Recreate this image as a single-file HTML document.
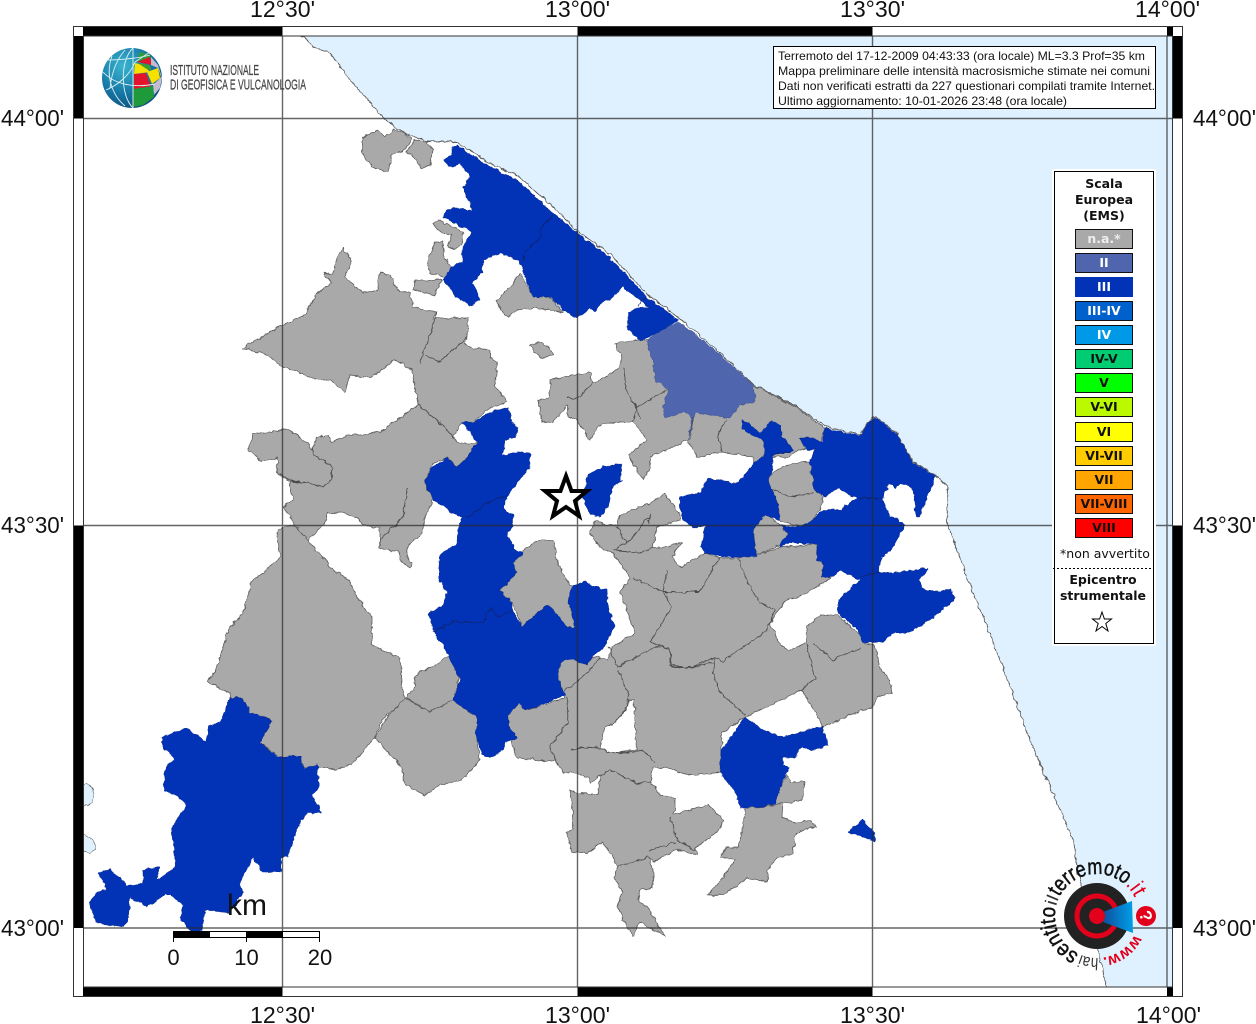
<!DOCTYPE html>
<html lang="it"><head><meta charset="utf-8"><title>Mappa intensità macrosismiche</title>
<style>html,body{margin:0;padding:0;background:#fff}svg{display:block}
.g{fill:#a9a9a9;stroke:#5c5c5c;stroke-width:.8;stroke-linejoin:round}
.b{fill:#0232b6;stroke:#0a2a8c;stroke-width:.5;stroke-linejoin:round}
.il{fill:none;stroke:#4c4c4c;stroke-width:.9}
.ilb{fill:none;stroke:#10246e;stroke-width:.9}
.gl{stroke:#2a2a2a;stroke-opacity:.72;stroke-width:1.4;fill:none}
.lab{font:23px "Liberation Sans",sans-serif;fill:#111}
.info{font:12px "Liberation Sans",sans-serif;fill:#111}
.lg{font:bold 12.5px "DejaVu Sans",sans-serif;fill:#111;text-anchor:middle}
.sw{stroke:#111;stroke-width:1}
</style></head><body>
<svg width="1256" height="1024" viewBox="0 0 1256 1024" xmlns="http://www.w3.org/2000/svg">
<defs>
<radialGradient id="gb" cx=".35" cy=".3" r=".8"><stop offset="0" stop-color="#3bb5cf"/><stop offset=".55" stop-color="#1679a6"/><stop offset="1" stop-color="#0e4a78"/></radialGradient>
<linearGradient id="cone" x1="0" x2="1"><stop offset="0" stop-color="#0d4f9e"/><stop offset="1" stop-color="#009fe8"/></linearGradient>
<path id="arc" d="M1135 933.7A42 42 0 1 1 1134.700 897.600" fill="none"/>
<clipPath id="ci"><rect x="83" y="36" width="1090" height="951"/></clipPath>
<filter id="w" filterUnits="userSpaceOnUse" x="0" y="0" width="1256" height="1024" color-interpolation-filters="sRGB">
<feTurbulence type="fractalNoise" baseFrequency="0.17" numOctaves="2" seed="7" result="n"/>
<feDisplacementMap in="SourceGraphic" in2="n" scale="4.500" xChannelSelector="R" yChannelSelector="G"/>
<feGaussianBlur stdDeviation="0.35"/>
</filter>
</defs>
<rect width="1256" height="1024" fill="#fff"/>
<g clip-path="url(#ci)"><g filter="url(#w)">
<!-- sea -->
<polygon points="292,26 315,48 330,53 350,80 383,117 403,133 427,141 457,142 487,162 520,177 553,207 577,231 610,254 647,294 680,319 707,341 753,384 797,407 827,427 860,435 870,419 877,417 897,434 913,462 933,474 948,487 947,523 967,577 1000,660 1030,740 1060,810 1073,840 1078,873 1083,893 1097,947 1110,1000 1190,1000 1190,26" fill="#dff1ff" stroke="#555" stroke-width=".9"/>
<path d="M70 784L83 784C92 784 96 790 93 797C92 803 88 806 83 807L70 807ZM70 830L83 834C90 838 97 842 96 848C93 853 88 853 83 852L70 852Z" fill="#dff1ff" stroke="#555" stroke-width=".7"/>
<!-- grey -->
<polygon class="g" points="362,137 378,130 385,137 394,129 412,138 405,150 392,155 388,172 375,168 366,160 362,152"/>
<polygon class="g" points="415,140 427,142 433,150 430,165 422,168 412,155 406,152"/>
<polygon class="g" points="433,223 440,220 453,227 463,232 462,243 455,250 448,245 452,235 440,232"/>
<polygon class="g" points="435,242 443,242 443,253 452,270 447,278 430,273 427,262 432,250"/>
<polygon class="g" points="416,280 442,280 435,295 413,290"/>
<polygon class="g" points="497,300 510,287 520,273 533,295 552,299 563,312 535,308 517,310 508,317 500,308"/>
<polygon class="g" points="530,345 541,342 548,347 554,355 540,358 534,352"/>
<polygon class="g" points="342,248 352,260 345,277 363,293 377,290 380,272 390,275 397,290 410,293 413,307 437,312 433,318 468,318 468,337 465,343 470,347 490,350 490,358 497,363 495,387 508,402 490,408 472,423 462,423 453,437 457,443 477,443 465,460 457,467 448,457 433,463 425,482 433,500 425,517 422,533 407,547 407,557 413,563 410,568 400,560 400,553 380,548 380,528 363,525 357,517 342,512 328,513 325,523 308,540 295,525 283,507 293,500 290,482 277,472 277,458 262,462 249,450 253,433 272,433 285,428 300,437 312,450 317,437 328,435 332,442 347,435 363,435 380,432 392,423 418,405 415,385 412,370 395,360 370,378 350,375 345,392 330,380 312,378 298,372 280,365 268,355 243,348 260,338 282,325 305,315 317,293 332,283 323,273 333,275 335,265"/>
<polygon class="g" points="283,527 295,525 308,540 333,570 350,580 355,595 372,617 372,645 400,658 403,693 405,700 382,720 375,737 353,763 335,770 318,767 305,768 300,757 280,757 260,743 272,720 248,712 243,698 230,698 230,693 208,683 217,667 228,630 243,613 252,580 263,573 280,557 277,532"/>
<polygon class="g" points="405,698 430,712 453,700 477,717 477,740 480,760 462,780 440,785 425,795 405,785 400,765 375,738 385,720"/>
<polygon class="g" points="448,655 458,673 458,690 453,700 430,712 405,697 413,690 417,673 433,667"/>
<polygon class="g" points="522,553 537,540 553,540 557,562 568,582 573,587 568,597 575,627 567,628 547,605 522,627 512,602 500,590 517,573 513,563"/>
<polygon class="g" points="550,380 573,375 590,372 593,383 605,378 618,368 622,358 615,344 637,340 647,340 700,338 753,385 797,408 825,428 820,445 795,452 790,457 765,457 755,462 753,457 722,452 698,457 687,440 667,450 650,457 650,468 643,480 628,455 647,440 633,422 617,422 600,425 590,440 577,420 568,417 568,405 553,422 542,423 538,400 550,397"/>
<polygon class="g" points="777,470 793,463 810,462 815,490 823,497 820,510 813,520 800,527 780,520 777,502 772,490 767,478"/>
<polygon class="g" points="765,513 780,525 788,535 780,545 757,555 753,532 757,525"/>
<polygon class="g" points="590,533 595,520 608,525 617,525 620,515 650,503 665,493 680,515 680,520 657,527 653,547 668,547 682,542 672,557 680,567 705,553 720,558 738,558 757,555 780,547 817,545 818,560 823,562 822,577 833,577 800,597 787,600 777,612 770,623 780,645 790,650 807,643 807,627 820,615 837,615 862,637 863,643 873,645 878,653 880,668 890,680 892,693 877,697 873,708 857,712 833,723 822,727 815,712 802,690 777,702 745,717 722,733 720,772 687,775 670,768 653,767 650,782 660,795 675,798 675,810 672,815 708,805 723,820 720,830 695,848 697,855 677,850 653,862 648,857 654,873 652,888 640,890 638,900 647,907 665,936 640,922 633,937 627,927 617,907 622,893 615,878 617,867 613,857 602,842 588,853 572,852 567,832 573,830 573,810 570,790 578,793 598,795 600,775 590,783 588,777 577,773 563,772 555,760 552,762 540,760 517,758 513,747 510,730 508,715 520,703 525,710 565,698 562,690 557,673 563,658 577,660 587,665 592,657 600,658 608,660 612,647 635,633 620,592 630,578 613,553 600,547"/>
<polygon points="627,700 634,700 635,725 637,750 610,753 600,748 605,727 615,722 627,707" fill="#fff" stroke="#5c5c5c" stroke-width=".7"/>
<polygon class="g" points="787,775 790,782 805,782 802,800 783,803 770,805"/>
<polygon class="g" points="745,808 763,807 783,803 782,817 795,823 810,820 817,827 800,830 795,837 793,853 777,858 768,870 767,882 747,878 738,885 723,895 708,895 723,877 735,860 720,857 727,847 738,847 743,827"/>
<!-- II -->
<polygon points="647,340 660,330 678,322 707,343 753,385 755,402 740,405 730,418 710,415 695,413 688,440 692,417 683,412 665,418 663,407 668,390 655,380 653,363" fill="#4f66ae" stroke="#39508f" stroke-width=".5"/>
<!-- blue -->
<polygon class="b" points="452,147 457,145 487,165 517,180 553,213 577,233 607,255 647,297 678,320 663,330 640,341 628,330 628,313 637,307 648,308 623,286 613,298 602,302 595,312 590,308 577,318 563,310 552,298 533,297 523,270 517,260 500,253 483,260 482,273 473,282 480,300 470,306 457,297 443,280 450,270 462,260 462,247 472,233 463,227 453,223 443,217 447,208 463,208 473,212 463,187 470,177 460,163 452,168 443,160 452,155"/>
<polygon class="b" points="742,420 747,422 760,433 772,420 780,425 782,437 793,450 787,453 773,455 773,470 768,480 772,490 777,502 780,520 770,517 765,515 757,525 753,532 757,557 723,557 705,553 700,547 706,526 692,528 682,517 679,497 700,493 708,478 737,483 755,462 765,455 763,440 747,433 742,428"/>
<polygon class="b" points="825,428 860,436 870,420 877,418 897,435 913,463 935,476 928,493 920,517 917,517 912,488 902,483 895,488 890,483 882,498 890,515 905,525 893,547 880,560 879,572 893,573 928,568 920,580 922,588 940,592 950,589 955,600 930,620 910,632 893,633 883,642 863,643 858,630 837,613 840,597 860,580 840,570 833,577 822,577 823,562 817,560 817,545 790,543 780,547 782,540 788,535 780,525 800,527 813,520 823,510 840,510 857,498 838,488 825,497 815,490 810,463 815,448 813,450 807,450 800,438 813,438 822,442"/>
<polygon class="b" points="490,412 508,407 512,423 518,428 515,438 505,440 503,455 520,452 530,453 530,467 517,483 507,497 503,508 513,515 513,527 507,533 515,550 523,552 513,563 517,573 500,590 512,602 512,610 522,627 547,605 557,612 567,628 575,627 568,597 573,585 585,582 600,588 607,590 608,608 615,627 605,645 600,650 592,657 587,665 577,660 563,660 557,673 562,690 567,695 525,710 520,703 508,715 510,730 518,738 505,742 503,750 490,758 481,752 476,735 477,717 453,700 460,680 448,655 435,633 428,613 442,607 447,593 438,578 440,555 457,543 458,528 462,518 433,500 425,482 432,468 447,457 457,467 465,460 477,443 470,432 462,423 468,420 472,423"/>
<polygon class="b" points="622,463 620,480 623,480 613,487 608,507 600,517 590,515 583,497 588,475 600,468"/>
<polygon class="b" points="230,698 243,698 250,712 272,720 260,743 278,757 300,756 305,769 317,764 319,788 313,795 321,813 307,813 300,823 287,857 280,858 282,872 263,872 253,857 240,883 243,893 230,913 205,910 202,931 190,931 180,917 183,905 167,893 147,907 130,898 128,922 123,927 95,922 90,903 97,892 107,890 98,873 110,869 128,886 143,883 143,870 160,867 157,880 175,868 172,827 187,805 178,797 164,790 165,767 175,758 163,747 162,737 187,728 206,742 210,725 220,722"/>
<polygon class="b" points="745,717 763,730 783,737 822,726 828,745 815,750 800,748 795,758 783,758 783,765 790,768 783,780 775,803 763,807 740,807 735,790 720,773 721,750"/>
<polygon class="b" points="848,832 863,820 875,832 875,842 863,837"/>
<!-- interior lines -->
<path class="il" d="M313 448L313 455L328 463L332 468L332 480L323 487L315 485L303 482L290 482M408 487L403 517L380 540M418 405L437 420L455 438M437 312L428 340L423 352L420 363M425 355L440 362L452 350L468 337M625 367L625 390L637 407L640 420M637 407L668 390M578 398L568 398M593 383L578 398M633 400L637 410L633 422M693 417L690 440M727 420L718 433L722 452M773 490L790 497L813 493M617 527L627 543L613 550M648 523L650 515L633 537L627 543M653 547L640 553L615 550M667 570L663 592L633 578M663 592L700 592L712 570L720 558M738 558L748 583L760 603L775 610M663 592L672 607L650 642L660 645L617 667L609 647M660 645L670 650L672 667L693 667L715 657L722 662L767 630L775 610M715 657L713 673L720 692L745 715M807 645L815 678L802 690M813 643L833 660L860 648M655 647L670 648L670 665L690 668L713 662M618 670L629 695L627 707L615 723M567 697L568 722L550 747L555 760M570 750L583 747L600 748L610 753L633 752L643 750L655 763M600 775L610 770L637 783L650 782M670 817L677 840L695 850M650 850L677 842M617 867L648 857M563 692L577 682L590 670L600 658"/>
<path class="ilb" d="M553 215L540 228L541 237L525 252L523 262M647 297L638 305M433 632L453 622L483 622L490 608L500 617L512 610M467 518L487 503L507 495M773 455L790 452M860 498L875 499L885 497M860 577L875 573L880 572"/>
</g></g>
<!-- grid -->
<path class="gl" d="M282.5 36V987M577.5 36V987M872.5 36V987M1167 36V987M83 118.5H1173M83 525.5H1173M83 928H1173"/>
<!-- frame -->
<g fill="#000">
<rect x="83" y="26" width="199.500" height="10"/><rect x="577.500" y="26" width="295" height="10"/><rect x="1167" y="26" width="6" height="10"/>
<rect x="83" y="987" width="199.500" height="10"/><rect x="577.500" y="987" width="295" height="10"/><rect x="1167" y="987" width="6" height="10"/>
<rect x="73" y="36" width="10" height="82.500"/><rect x="73" y="525.500" width="10" height="402.500"/>
<rect x="1173" y="36" width="10" height="82.500"/><rect x="1173" y="525.500" width="10" height="402.500"/>
</g>
<rect x="73.500" y="26.500" width="1109" height="970" fill="none" stroke="#333" stroke-width="1"/>
<rect x="83.500" y="36" width="1089" height="951" fill="none" stroke="#333" stroke-width="1"/>
<!-- axis labels -->
<g class="lab">
<text x="250" y="17" textLength="65" lengthAdjust="spacingAndGlyphs">12°30'</text>
<text x="545" y="17" textLength="65" lengthAdjust="spacingAndGlyphs">13°00'</text>
<text x="840" y="17" textLength="65" lengthAdjust="spacingAndGlyphs">13°30'</text>
<text x="1135" y="17" textLength="65" lengthAdjust="spacingAndGlyphs">14°00'</text>
<text x="250" y="1023" textLength="65" lengthAdjust="spacingAndGlyphs">12°30'</text>
<text x="545" y="1023" textLength="65" lengthAdjust="spacingAndGlyphs">13°00'</text>
<text x="840" y="1023" textLength="65" lengthAdjust="spacingAndGlyphs">13°30'</text>
<text x="1136" y="1023" textLength="65" lengthAdjust="spacingAndGlyphs">14°00'</text>
<text x="1" y="126" textLength="63" lengthAdjust="spacingAndGlyphs">44°00'</text>
<text x="1" y="533" textLength="63" lengthAdjust="spacingAndGlyphs">43°30'</text>
<text x="1" y="936" textLength="63" lengthAdjust="spacingAndGlyphs">43°00'</text>
<text x="1193" y="126" textLength="63" lengthAdjust="spacingAndGlyphs">44°00'</text>
<text x="1193" y="533" textLength="63" lengthAdjust="spacingAndGlyphs">43°30'</text>
<text x="1193" y="936" textLength="63" lengthAdjust="spacingAndGlyphs">43°00'</text>
</g>
<!-- star -->
<polygon points="566,476 571.500,491 587,491 575,501 579,516 566,507 553,516 557,501 545,491 560.500,491" fill="#fff" stroke="#000" stroke-width="4" stroke-linejoin="miter"/>
<!-- INGV logo -->
<circle cx="132" cy="78" r="30" fill="url(#gb)"/>
<polygon points="137,61 140,52 150,55 151,58 138,63" fill="#2d9a3c"/>
<polygon points="137,62 150,57 152,65" fill="#e3132d"/>
<polygon points="135,63 143,65 150,72 134,74" fill="#f5e000"/>
<polygon points="138,63 150,65 151,71 145,68" fill="#3a9f30"/>
<polygon points="134,74 146,73 151,87 134,89" fill="#e3132d"/>
<polygon points="147,72 158,68 160,78 152,84" fill="#f5e000"/>
<polygon points="151,57 158,65 162,78 160,88 154,95 153,85 161,77 158,68 151,65" fill="#c3bccf"/>
<polygon points="133,89 153,86 154,97 143,105 133,107" fill="#1f9a3b"/>
<g fill="none" stroke="#dff1f5" stroke-width=".9">
<path d="M133 48C120 60 120 95 133 108M133 48V108M112 56C105 75 112 95 125 106M103 72C115 85 135 88 155 84M108 60C120 60 140 58 150 55M106 90C118 85 130 75 135 62M135 62L150 52M125 50C118 58 112 70 110 88"/>
</g>
<text x="170" y="75" font-family="Liberation Sans, sans-serif" font-size="15" fill="#444" stroke="#444" stroke-width=".25" textLength="89" lengthAdjust="spacingAndGlyphs">ISTITUTO NAZIONALE</text>
<text x="170" y="89.500" font-family="Liberation Sans, sans-serif" font-size="15" fill="#444" stroke="#444" stroke-width=".25" textLength="136" lengthAdjust="spacingAndGlyphs">DI GEOFISICA E VULCANOLOGIA</text>
<!-- info box -->
<rect x="773.500" y="46.500" width="382" height="62" fill="#fff" stroke="#000" stroke-width="1"/>
<g class="info">
<text x="778" y="60" textLength="367" lengthAdjust="spacingAndGlyphs">Terremoto del 17-12-2009 04:43:33 (ora locale) ML=3.3 Prof=35 km</text>
<text x="778" y="75" textLength="372" lengthAdjust="spacingAndGlyphs">Mappa preliminare delle intensità macrosismiche stimate nei comuni</text>
<text x="778" y="90" textLength="377" lengthAdjust="spacingAndGlyphs">Dati non verificati estratti da 227 questionari compilati tramite Internet.</text>
<text x="778" y="105" textLength="289" lengthAdjust="spacingAndGlyphs">Ultimo aggiornamento: 10-01-2026 23:48 (ora locale)</text>
</g>
<!-- legend -->
<rect x="1052" y="169" width="104" height="477" fill="#fff"/>
<rect x="1054.500" y="171.500" width="99" height="472" fill="#fff" stroke="#000" stroke-width="1"/>
<g class="lg">
<text x="1104" y="188">Scala</text><text x="1104" y="204">Europea</text><text x="1104" y="220">(EMS)</text>
</g>
<g class="sw">
<rect x="1075.500" y="229.500" width="57" height="19" fill="#a9a9a9"/>
<rect x="1075.500" y="253.500" width="57" height="19" fill="#4f66ae"/>
<rect x="1075" y="277" width="58" height="20" fill="#0232b6" stroke="none"/>
<rect x="1075.500" y="301.500" width="57" height="19" fill="#0060cc"/>
<rect x="1075.500" y="325.500" width="57" height="19" fill="#0099e8"/>
<rect x="1075.500" y="349.500" width="57" height="19" fill="#00cc72"/>
<rect x="1075.500" y="373.500" width="57" height="19" fill="#00ff00"/>
<rect x="1075.500" y="397.500" width="57" height="19" fill="#bbf900"/>
<rect x="1075.500" y="422.500" width="57" height="19" fill="#ffff00"/>
<rect x="1075.500" y="446.500" width="57" height="19" fill="#ffcc00"/>
<rect x="1075.500" y="470.500" width="57" height="19" fill="#ffa500"/>
<rect x="1075.500" y="494.500" width="57" height="19" fill="#ff6600"/>
<rect x="1075.500" y="518.500" width="57" height="19" fill="#ff0000"/>
</g>
<g class="lg">
<text x="1104" y="243" style="fill:#eee">n.a.*</text>
<text x="1104" y="267" style="fill:#fff">II</text>
<text x="1104" y="291" style="fill:#fff">III</text>
<text x="1104" y="315" style="fill:#fff">III-IV</text>
<text x="1104" y="339" style="fill:#fff">IV</text>
<text x="1104" y="363">IV-V</text>
<text x="1104" y="387">V</text>
<text x="1104" y="411">V-VI</text>
<text x="1104" y="436">VI</text>
<text x="1104" y="460">VI-VII</text>
<text x="1104" y="484">VII</text>
<text x="1104" y="508">VII-VIII</text>
<text x="1104" y="532">VIII</text>
<text x="1105" y="558" style="font-weight:normal">*non avvertito</text>
<text x="1103" y="584">Epicentro</text>
<text x="1103" y="600">strumentale</text>
</g>
<line x1="1053" y1="568.500" x2="1152" y2="568.500" stroke="#000" stroke-width="1" stroke-dasharray="2 2"/>
<polygon points="1102,612 1104.400,619 1111.500,619 1105.800,623.500 1108,631 1102,626.500 1096,631 1098.200,623.500 1092.500,619 1099.600,619" fill="#fff" stroke="#000" stroke-width="1"/>
<!-- scale bar -->
<rect x="173.500" y="931.500" width="146" height="6" fill="#fff" stroke="#000" stroke-width="1"/>
<rect x="173" y="931" width="37" height="7" fill="#000"/>
<rect x="246" y="931" width="37" height="7" fill="#000"/>
<path d="M173.500 931V942M246.500 931V942M319.500 931V942" stroke="#000" stroke-width="1"/>
<g font-family="Liberation Sans, sans-serif" font-size="22" fill="#111" text-anchor="middle">
<text x="173.500" y="965">0</text><text x="246.500" y="965">10</text><text x="320" y="965">20</text>
</g>
<text x="227" y="915" font-family="Liberation Sans, sans-serif" font-size="30" fill="#111">km</text>
<!-- hai sentito logo -->
<circle cx="1097" cy="916" r="33" fill="#222"/>
<circle cx="1097" cy="916" r="20" fill="none" stroke="#e2001a" stroke-width="5"/>
<polygon points="1103,912 1132,901 1133,933 1103,922" fill="url(#cone)"/>
<circle cx="1097" cy="916" r="8" fill="#e2001a"/>
<circle cx="1146" cy="916" r="10" fill="#e2001a"/>
<text x="1146" y="922" transform="rotate(70 1146 916)" font-family="Liberation Sans, sans-serif" font-weight="bold" font-size="17" fill="#fff" text-anchor="middle">?</text>
<g font-family="Liberation Sans, sans-serif" font-size="22">
<text fill="#e2001a" font-weight="bold" font-size="16"><textPath href="#arc" startOffset="1" textLength="41" lengthAdjust="spacingAndGlyphs">www.</textPath></text>
<text fill="#333" font-size="17"><textPath href="#arc" startOffset="46" textLength="18" lengthAdjust="spacingAndGlyphs">hai</textPath></text>
<text fill="#111" stroke="#111" stroke-width=".5"><textPath href="#arc" startOffset="66" textLength="56" lengthAdjust="spacingAndGlyphs">sentito</textPath></text>
<text fill="#333" font-size="17"><textPath href="#arc" startOffset="123" textLength="9" lengthAdjust="spacingAndGlyphs">il</textPath></text>
<text fill="#111" stroke="#111" stroke-width=".5"><textPath href="#arc" startOffset="133" textLength="77" lengthAdjust="spacingAndGlyphs">terremoto</textPath></text>
<text fill="#e2001a"><textPath href="#arc" startOffset="210" textLength="16" lengthAdjust="spacingAndGlyphs">.it</textPath></text>
</g>
</svg>
</body></html>
